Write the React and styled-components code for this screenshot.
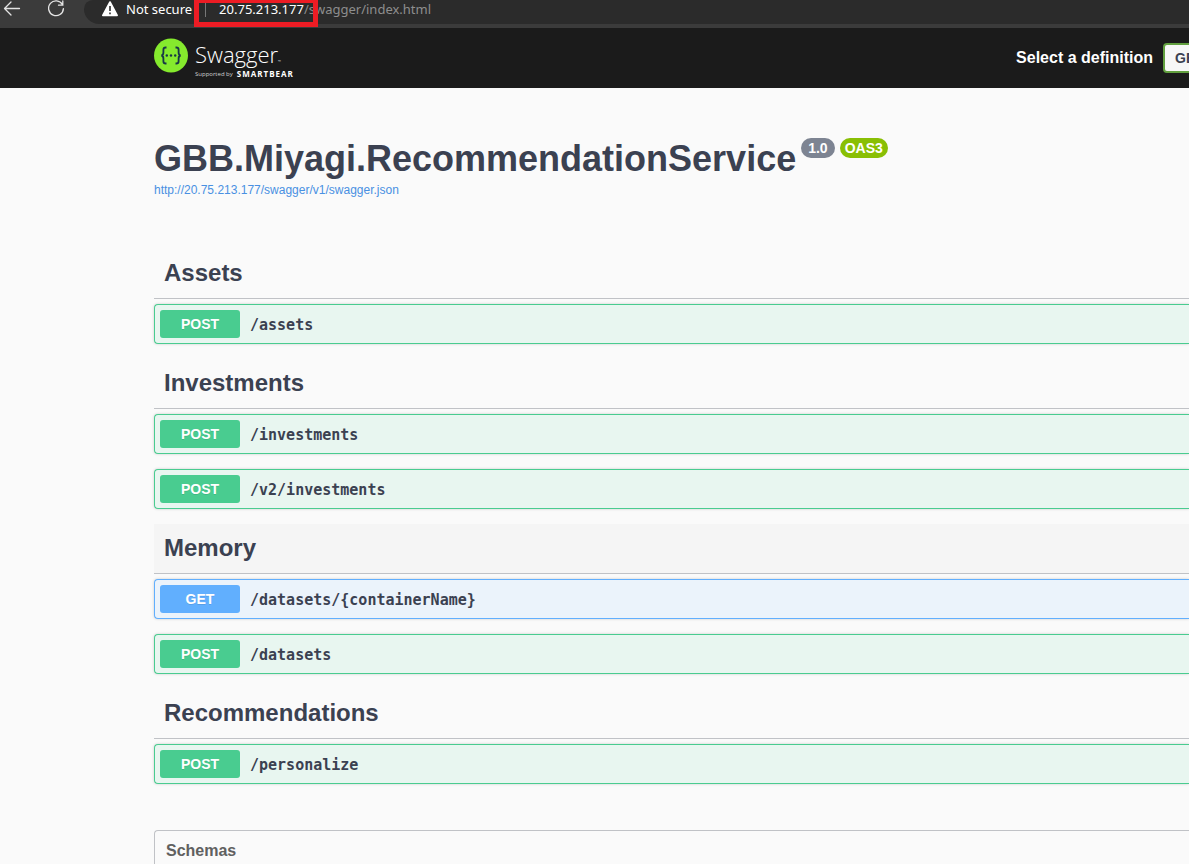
import React from "react";
import styled, { createGlobalStyle } from "styled-components";

const GlobalStyle = createGlobalStyle`
  * { box-sizing: border-box; }
  body {
    margin: 0;
    background: #fafafa;
    color: #3b4151;
    font-family: "Liberation Sans", Arial, sans-serif;
    overflow-x: hidden;
  }
  h1, h2, h3 { margin: 0; }
`;

const BrowserBar = styled.div`
  position: relative;
  display: flex;
  align-items: flex-start;
  height: 28px;
  background: #3b3b3b;
`;

const NavButtons = styled.div`
  display: flex;
  flex: 0 0 84px;
  gap: 24px;
  height: 28px;
`;

const NavButton = styled.button`
  display: flex;
  width: 24px;
  height: 20px;
  padding: 0;
  border: 0;
  background: none;
  color: #e4e4e4;
  cursor: pointer;
`;

const AddressBar = styled.div`
  display: flex;
  flex: 1;
  align-items: flex-start;
  height: 24px;
  padding-left: 17px;
  border-radius: 10px 0 0 17px;
  background: #2b2b2b;
  color: #8e8e8e;
  font: 13px/18px "Noto Sans", "Open Sans", sans-serif;
  white-space: nowrap;
`;

const Security = styled.span`
  margin-left: 7px;
  color: #fff;
`;

const Divider = styled.span`
  width: 1px;
  height: 14px;
  margin: 3px 13px 0;
  background: #777;
`;

const Host = styled.span`
  color: #fff;
`;

const Highlight = styled.div`
  position: absolute;
  left: 194px;
  top: -2px;
  width: 124px;
  height: 29px;
  border: 5px solid #ed1c24;
`;

const TopBar = styled.header`
  display: flex;
  align-items: center;
  height: 60px;
  padding-left: 154px;
  background: #1b1b1b;
  color: #fff;
`;

const Brand = styled.a`
  display: flex;
  flex: 1;
  gap: 7px;
  height: 40px;
  color: #fff;
  text-decoration: none;
  font-family: "Open Sans", sans-serif;
`;

const BrandText = styled.span`
  display: flex;
  flex-direction: column;
  gap: 2px;
  padding-top: 3px;
`;

const BrandName = styled.span`
  font-size: 22px;
  font-weight: 300;
  line-height: 26px;
  small {
    font-size: 4px;
    line-height: 4px;
  }
`;

const BrandTagline = styled.span`
  display: flex;
  gap: 4px;
  font-size: 6px;
  line-height: 10px;
  color: #d0d0d0;
  b {
    color: #fff;
    font-size: 8px;
    letter-spacing: 1px;
  }
`;

const DefinitionLabel = styled.label`
  margin-right: 10px;
  font-size: 16px;
  font-weight: 700;
`;

const SelectClip = styled.div`
  flex: 0 0 26px;
  overflow: hidden;
`;

const DefinitionSelect = styled.select`
  display: block;
  width: 320px;
  height: 30px;
  padding: 0 10px;
  border: 2px solid #62a03f;
  border-radius: 4px;
  appearance: none;
  background: #f7f7f7;
  color: #3b4151;
  font: 700 14px "Liberation Sans", Arial, sans-serif;
`;

const Page = styled.main`
  padding-left: 154px;
`;

const Info = styled.section`
  height: 161px;
  padding-top: 48px;
`;

const Title = styled.h1`
  display: flex;
  align-items: flex-start;
  gap: 5px;
  font-size: 36px;
  line-height: 46px;
  white-space: nowrap;
`;

const Badge = styled.small`
  height: 20px;
  margin-top: 2px;
  padding: 0 ${(p) => (p.$green ? 5 : 7)}px;
  border-radius: 10px;
  background: ${(p) => (p.$green ? "#89bf04" : "#7d8492")};
  color: #fff;
  font-size: 14px;
  line-height: 20px;
`;

const SpecLink = styled.a`
  display: block;
  color: #4990e2;
  font-size: 12px;
  line-height: 16px;
  text-decoration: none;
`;

const TagHeading = styled.h2`
  height: 50px;
  margin-bottom: 5px;
  padding-left: 10px;
  border-bottom: 1px solid #c0c2c6;
  background: ${(p) => (p.$active ? "#f5f5f5" : "transparent")};
  font-size: 24px;
  line-height: 48px;
`;

const methods = {
  POST: { main: "#49cc90", tint: "#e8f6f0" },
  GET: { main: "#61affe", tint: "#ebf3fb" },
};

const Operation = styled.button`
  display: flex;
  align-items: center;
  gap: 10px;
  width: 100%;
  height: 40px;
  margin-bottom: 15px;
  padding: 0 5px;
  border: 1px solid ${(p) => methods[p.$method].main};
  border-right: 0;
  border-radius: 4px 0 0 4px;
  background: ${(p) => methods[p.$method].tint};
  box-shadow: 0 0 3px rgba(0, 0, 0, 0.19);
  color: #3b4151;
  text-align: left;
  cursor: pointer;
`;

const Method = styled.span`
  width: 80px;
  border-radius: 3px;
  background: ${(p) => methods[p.$method].main};
  color: #fff;
  font: 700 14px/28px "Liberation Sans", Arial, sans-serif;
  text-align: center;
  text-shadow: 0 1px 0 rgba(0, 0, 0, 0.1);
`;

const Path = styled.span`
  padding-top: 2px;
  font: 700 15px/20px "DejaVu Sans Mono", monospace;
`;

const Schemas = styled.section`
  margin-top: 46px;
  padding: 0 11px;
  border: 1px solid #c0c2c6;
  border-right: 0;
  border-radius: 4px 0 0 4px;
`;

const SchemasTitle = styled.h3`
  color: #606060;
  font-size: 16px;
  line-height: 39px;
`;

const tags = [
  { name: "Assets", operations: [["POST", "/assets"]] },
  {
    name: "Investments",
    operations: [
      ["POST", "/investments"],
      ["POST", "/v2/investments"],
    ],
  },
  {
    name: "Memory",
    active: true,
    operations: [
      ["GET", "/datasets/{containerName}"],
      ["POST", "/datasets"],
    ],
  },
  { name: "Recommendations", operations: [["POST", "/personalize"]] },
];

const BackIcon = () => (
  <svg width="24" height="20" viewBox="0 0 24 20" fill="none" stroke="currentColor" strokeWidth="1.3" strokeLinecap="round" strokeLinejoin="round">
    <path d="M19.5 8.5H4.5M11 2 4.5 8.5 11 15" />
  </svg>
);

const ReloadIcon = () => (
  <svg width="24" height="20" viewBox="0 0 24 20" fill="none" stroke="currentColor" strokeWidth="1.3" strokeLinecap="round">
    <path d="M14.4 4.5A7.4 7.4 0 1 0 15.4 8.6M14.8 1v4.2h-4.3" />
  </svg>
);

const WarningIcon = () => (
  <svg width="18" height="18" viewBox="0 0 18 18">
    <path d="M9 2 16.2 15.4H1.8Z" fill="#fff" stroke="#fff" strokeWidth="1.6" strokeLinejoin="round" />
    <path d="M9 6v5M9 12.6v1.6" stroke="#2b2b2b" strokeWidth="1.6" />
  </svg>
);

const SwaggerMark = () => (
  <svg width="34" height="35" viewBox="0 0 34 35" fill="none">
    <circle cx="17" cy="17.5" r="17" fill="#85ea2d" />
    <g stroke="#173647" strokeWidth="1.8">
      <path d="M12.5 9.5h-.8c-1.7 0-2.3.8-2.3 2.3v2.8c0 1.6-.5 2.6-2 2.9 1.5.3 2 1.3 2 2.9v2.8c0 1.5.6 2.3 2.3 2.3h.8" />
      <path d="M21.5 9.5h.8c1.7 0 2.3.8 2.3 2.3v2.8c0 1.6.5 2.6 2 2.9-1.5.3-2 1.3-2 2.9v2.8c0 1.5-.6 2.3-2.3 2.3h-.8" />
    </g>
    <g fill="#173647">
      <circle cx="12.8" cy="17.5" r="1.2" />
      <circle cx="17" cy="17.5" r="1.2" />
      <circle cx="21.2" cy="17.5" r="1.2" />
    </g>
  </svg>
);

export default function App() {
  return (
    <>
      <GlobalStyle />
      <BrowserBar>
        <NavButtons>
          <NavButton aria-label="Back"><BackIcon /></NavButton>
          <NavButton aria-label="Reload"><ReloadIcon /></NavButton>
        </NavButtons>
        <AddressBar>
          <WarningIcon />
          <Security>Not secure</Security>
          <Divider />
          <Host>20.75.213.177</Host>
          <span>/swagger/index.html</span>
        </AddressBar>
        <Highlight />
      </BrowserBar>
      <TopBar>
        <Brand href="#" aria-label="Swagger, supported by SmartBear">
          <SwaggerMark />
          <BrandText>
            <BrandName>Swagger<small>™</small></BrandName>
            <BrandTagline>Supported by <b>SMARTBEAR</b></BrandTagline>
          </BrandText>
        </Brand>
        <DefinitionLabel htmlFor="definition">Select a definition</DefinitionLabel>
        <SelectClip>
          <DefinitionSelect id="definition">
            <option>GBB.Miyagi.RecommendationService</option>
          </DefinitionSelect>
        </SelectClip>
      </TopBar>
      <Page>
        <Info>
          <Title>
            GBB.Miyagi.RecommendationService
            <Badge>1.0</Badge>
            <Badge $green>OAS3</Badge>
          </Title>
          <SpecLink href="#">http://20.75.213.177/swagger/v1/swagger.json</SpecLink>
        </Info>
        {tags.map((tag) => (
          <section key={tag.name}>
            <TagHeading $active={tag.active}>{tag.name}</TagHeading>
            {tag.operations.map(([method, path]) => (
              <Operation key={path} $method={method}>
                <Method $method={method}>{method}</Method>
                <Path>{path}</Path>
              </Operation>
            ))}
          </section>
        ))}
        <Schemas>
          <SchemasTitle>Schemas</SchemasTitle>
        </Schemas>
      </Page>
    </>
  );
}
